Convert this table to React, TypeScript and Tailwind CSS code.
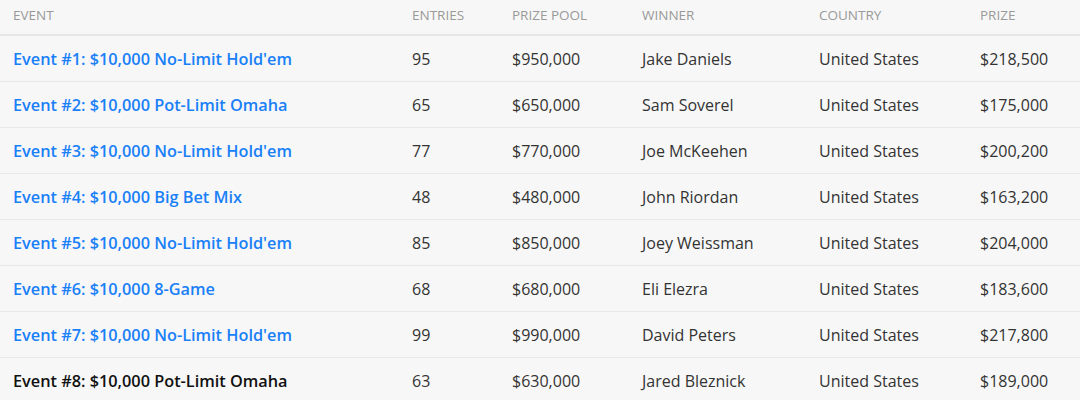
const events = [
  { name: "Event #1: $10,000 No-Limit Hold'em", entries: 95, pool: '$950,000', winner: 'Jake Daniels', country: 'United States', prize: '$218,500', link: true },
  { name: 'Event #2: $10,000 Pot-Limit Omaha', entries: 65, pool: '$650,000', winner: 'Sam Soverel', country: 'United States', prize: '$175,000', link: true },
  { name: "Event #3: $10,000 No-Limit Hold'em", entries: 77, pool: '$770,000', winner: 'Joe McKeehen', country: 'United States', prize: '$200,200', link: true },
  { name: 'Event #4: $10,000 Big Bet Mix', entries: 48, pool: '$480,000', winner: 'John Riordan', country: 'United States', prize: '$163,200', link: true },
  { name: "Event #5: $10,000 No-Limit Hold'em", entries: 85, pool: '$850,000', winner: 'Joey Weissman', country: 'United States', prize: '$204,000', link: true },
  { name: 'Event #6: $10,000 8-Game', entries: 68, pool: '$680,000', winner: 'Eli Elezra', country: 'United States', prize: '$183,600', link: true },
  { name: "Event #7: $10,000 No-Limit Hold'em", entries: 99, pool: '$990,000', winner: 'David Peters', country: 'United States', prize: '$217,800', link: true },
  { name: 'Event #8: $10,000 Pot-Limit Omaha', entries: 63, pool: '$630,000', winner: 'Jared Bleznick', country: 'United States', prize: '$189,000', link: false },
]

const cols = 'grid grid-cols-[399px_100px_130px_177px_161px_1fr] pl-[13px]'

export default function App() {
  return (
    <div className="w-[1080px] h-[400px] overflow-hidden bg-[#f7f7f7] font-['Open_Sans',sans-serif]">
      <div className={`${cols} h-[36px] pb-[3px] items-center border-b-2 border-[#e6e6e6] text-[13.5px] text-[#999] uppercase`}>
        <div>Event</div>
        <div>Entries</div>
        <div>Prize Pool</div>
        <div>Winner</div>
        <div>Country</div>
        <div>Prize</div>
      </div>
      {events.map(e => (
        <div key={e.name} className={`${cols} h-[46px] pt-[1px] items-center border-b border-[#e8e8e8] text-[16px] text-[#333]`}>
          <div className={`font-semibold text-[16.3px] ${e.link ? 'text-[#1a80f8]' : 'text-[#111]'}`}>{e.name}</div>
          <div>{e.entries}</div>
          <div>{e.pool}</div>
          <div>{e.winner}</div>
          <div>{e.country}</div>
          <div>{e.prize}</div>
        </div>
      ))}
    </div>
  )
}
